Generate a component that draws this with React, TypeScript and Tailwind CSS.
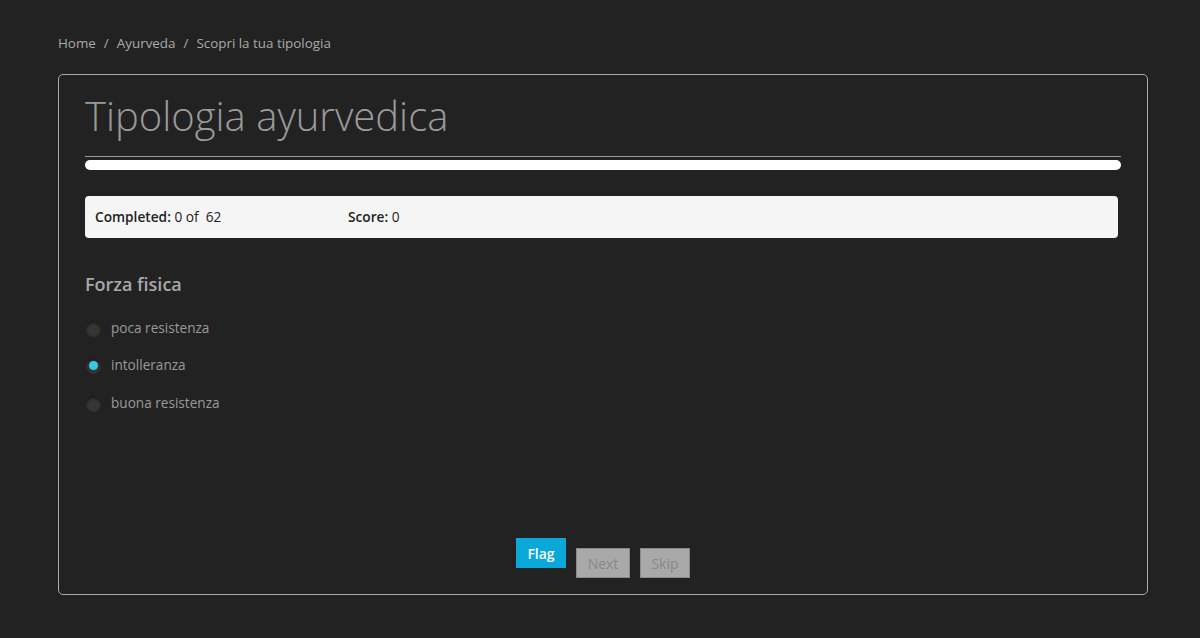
import React from 'react';

const options = [
  { id: 'poca', label: 'poca resistenza', checked: false },
  { id: 'intolleranza', label: 'intolleranza', checked: true },
  { id: 'buona', label: 'buona resistenza', checked: false },
];

const Radio = ({ checked }: { checked: boolean }) => (
  <span className="flex h-[15px] w-[15px] items-center justify-center rounded-full bg-[#363636] shadow-[inset_0_2px_3px_rgba(0,0,0,0.55),0_1px_0_rgba(255,255,255,0.08)]">
    {checked && <span className="h-[9px] w-[9px] rounded-full bg-[#39c6ea]" />}
  </span>
);

export default function App() {
  return (
    <div
      className="min-h-[638px] w-full bg-[#222222] pl-[58px] pr-[52px]"
      style={{ fontFamily: '"Open Sans", "Liberation Sans", sans-serif' }}
    >
      {/* breadcrumb */}
      <nav className="flex h-[74px] items-center pt-[12px] text-[13.4px] text-[#aaaaaa]">
        <span>Home</span>
        <span className="px-[8px]">/</span>
        <span>Ayurveda</span>
        <span className="px-[8px]">/</span>
        <span>Scopri la tua tipologia</span>
      </nav>

      <div className="flex h-[521px] flex-col rounded-[5px] border border-[#aaaaaa] px-[26px]">
        <h1 className="pt-[13px] text-[40px] font-light leading-[56px] text-[#9a9a9a]">
          Tipologia ayurvedica
        </h1>
        <div className="mt-[12px] h-px bg-[#9a9a9a]" />
        <div className="mt-[3px] h-[10px] rounded-full bg-white" />

        <div className="mr-[3px] mt-[26px] flex h-[42px] items-center rounded-[4px] bg-[#f5f5f5] px-[10px] text-[13.7px] text-[#222222]">
          <div className="w-[253px]">
            <span className="font-semibold">Completed:</span> 0 of&nbsp; 62
          </div>
          <div>
            <span className="font-semibold">Score:</span> 0
          </div>
        </div>

        <h2 className="mt-[33px] text-[18px] font-semibold text-[#a8a8a8]">Forza fisica</h2>

        <div className="mt-[19px] flex flex-col gap-[15.5px]">
          {options.map((o) => (
            <label key={o.id} className="flex h-[22px] items-center gap-[10px] pl-[1px] text-[13.6px] text-[#9a9a9a]">
              <Radio checked={o.checked} />
              <span>{o.label}</span>
            </label>
          ))}
        </div>

        <div className="mt-auto flex justify-center gap-[10px] pb-[16px] text-[14px]">
          <button className="h-[30px] w-[50px] bg-[#0aa8d8] font-semibold text-white">Flag</button>
          <button className="mt-[10px] h-[30px] w-[54px] border border-[#8a8a8a] bg-[#a9a9a9] text-[#888888]">
            Next
          </button>
          <button className="mt-[10px] h-[30px] w-[50px] border border-[#8a8a8a] bg-[#a9a9a9] text-[#888888]">
            Skip
          </button>
        </div>
      </div>
    </div>
  );
}
